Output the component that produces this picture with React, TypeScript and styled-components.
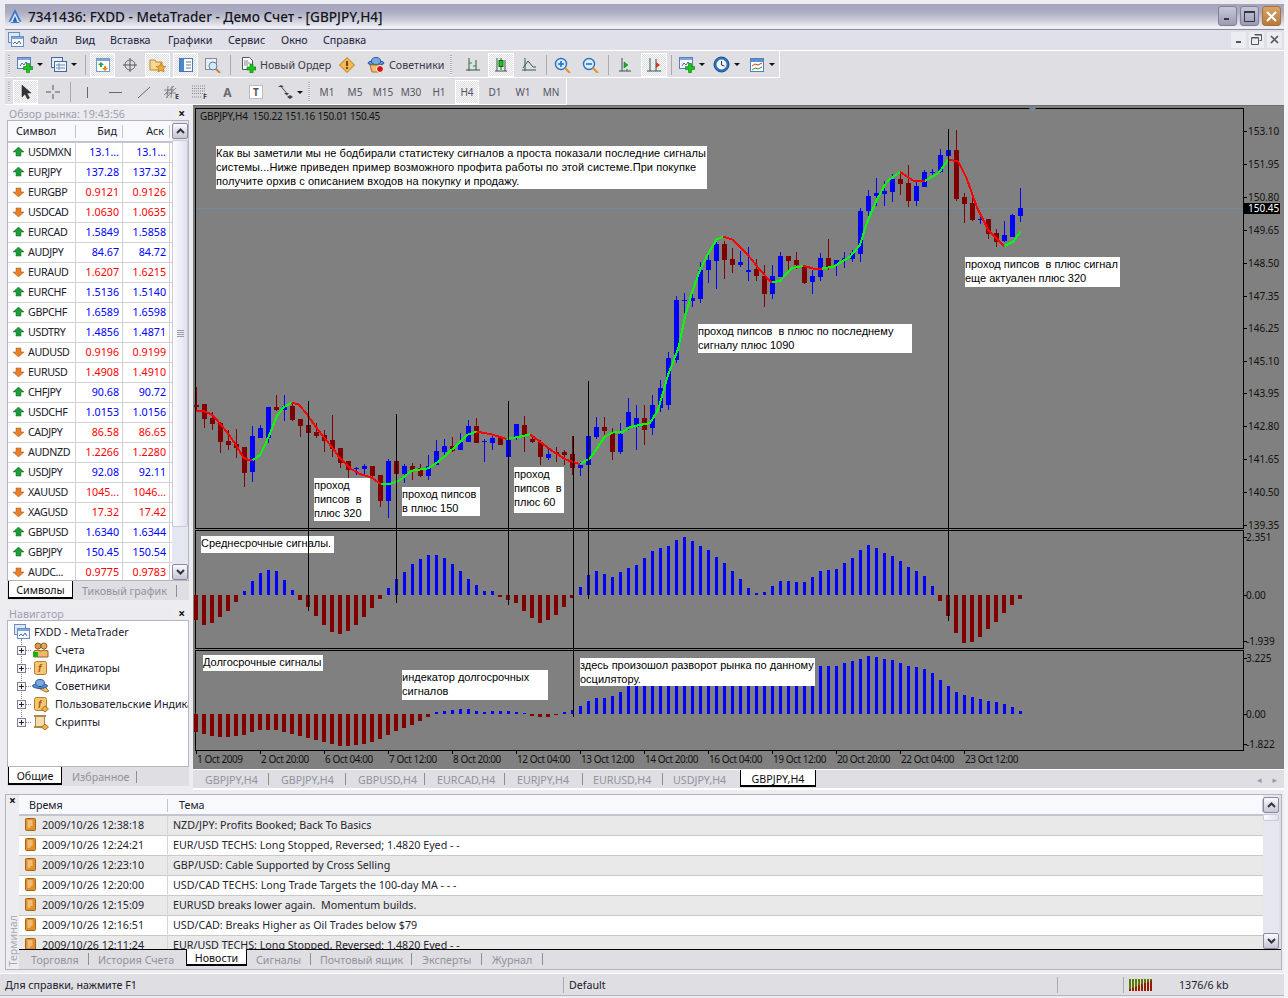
import React from "react";
import styled, { createGlobalStyle } from "styled-components";

const FONT = `"Noto Sans", "DejaVu Sans", sans-serif`;
const NOTE_FONT = `"Liberation Sans", Arial, sans-serif`;
const CHART_X = 193;
const CHART_Y = 105;

const GlobalStyle = createGlobalStyle`
  html, body { margin: 0; padding: 0; background: #f4f4f6; }
  * { box-sizing: border-box; }
`;

const Root = styled.div`
  width: 1284px;
  height: 998px;
  padding: 4px 0 0 5px;
  display: flex;
  flex-direction: column;
  overflow: hidden;
  font-family: ${FONT};
  font-size: 10.7px;
  color: #20202c;
  background: #ededf1;
`;

/* title + menu */
const TitleBar = styled.div`
  height: 24px;
  flex: none;
  display: flex;
  align-items: center;
  padding: 0 3px 0 2px;
  background: linear-gradient(#a3a4bc 0%, #adaec3 35%, #c9cad7 65%, #f3f3f7 100%);
`;

const TitleText = styled.div`
  margin-left: 5px;
  font-size: 13.6px;
  font-weight: 500;
  color: #14141c;
`;

const WinButtons = styled.div`
  margin-left: auto;
  display: flex;
  gap: 3px;
`;

const WinButton = styled.div<{ $close?: boolean }>`
  width: 19px;
  height: 20px;
  border: 1px solid ${(p) => (p.$close ? "#a8703a" : "#7f8096")};
  border-radius: 3px;
  background: ${(p) =>
    p.$close ? "linear-gradient(#d9a468, #b67a3c)" : "linear-gradient(#c7c8d6, #9a9bb2)"};
  display: flex;
  align-items: center;
  justify-content: center;
`;

const MenuBar = styled.div`
  height: 22px;
  flex: none;
  display: flex;
  align-items: center;
  padding: 0 2px 1px 3px;
  margin-top: 1px;
  border-top: 1px solid #8b8ca6;
  border-bottom: 1px solid #fff;
  background: #dfe0e8;
`;

const MenuItem = styled.span<{ $w: number }>`
  width: ${(p) => p.$w}px;
  color: #22223a;
`;

const MdiButtons = styled.div`
  margin-left: auto;
  display: flex;
  gap: 3px;
`;

const MdiButton = styled.div`
  width: 15px;
  height: 16px;
  background: #ecedf2;
  display: flex;
  align-items: center;
  justify-content: center;
`;

/* toolbars */
const ToolRow = styled.div<{ $w: number; $pt: number }>`
  height: 27px;
  width: ${(p) => p.$w}px;
  flex: none;
  display: flex;
  align-items: center;
  padding-top: ${(p) => p.$pt}px;
  background: #dedee3;
  border-right: 1px solid #fff;
  border-bottom: 1px solid #fff;
`;

const ToolStrip = styled.div`
  flex: none;
  background: #dedee3;
`;

const Grip = styled.div<{ $w: number }>`
  width: ${(p) => p.$w}px;
  flex: none;
  height: 20px;
  background: repeating-linear-gradient(#a8a8b2 0 1px, #f4f4f6 1px 2px) no-repeat 3px 0 / 2px 100%;
`;

const Sep = styled.div<{ $w: number }>`
  width: ${(p) => p.$w}px;
  flex: none;
  height: 20px;
  background: linear-gradient(#a9a9b3, #a9a9b3) no-repeat center / 1px 100%;
`;

const Tool = styled.div<{ $w: number; $pad?: number; $pressed?: boolean; $ml?: number }>`
  width: ${(p) => p.$w}px;
  height: 24px;
  flex: none;
  margin-left: ${(p) => p.$ml ?? 0}px;
  display: flex;
  align-items: center;
  gap: 4px;
  justify-content: ${(p) => (p.$pad !== undefined ? "flex-start" : "center")};
  padding-left: ${(p) => p.$pad ?? 0}px;
  color: #3a3a48;
  white-space: nowrap;
  ${(p) =>
    p.$pressed &&
    `border: 1px solid #fff;
     background: repeating-conic-gradient(#fbfbfc 0 25%, #dcdce1 0 50%) 0 0 / 2px 2px;`}
`;

const Period = styled.span`
  font-size: 10px;
  color: #55555f;
`;

const DrawLetter = styled.span`
  font-size: 12px;
  font-weight: 700;
  color: #6a6a72;
`;

const Caret = styled.span`
  width: 0;
  height: 0;
  flex: none;
  border-left: 3px solid transparent;
  border-right: 3px solid transparent;
  border-top: 3px solid #111;
`;

/* main area */
const Main = styled.div`
  height: 685px;
  flex: none;
  display: flex;
`;

const LeftColumn = styled.div`
  width: 188px;
  flex: none;
  display: flex;
  flex-direction: column;
  padding: 2px 4px 0 2px;
`;

const PanelTitle = styled.div`
  height: 13px;
  flex: none;
  display: flex;
  align-items: center;
  justify-content: space-between;
  padding: 0 4px 0 2px;
  color: #a0a0a8;
  background: linear-gradient(90deg, #ebebf1 0 167px, transparent 167px);
`;

const CloseMark = styled.span`
  font-size: 12px;
  font-weight: 700;
  line-height: 1;
  color: #111;
`;

const PanelBody = styled.div<{ $h: number }>`
  height: ${(p) => p.$h}px;
  flex: none;
  display: flex;
  background: #fff;
  border: 1px solid #b4b4c0;
  overflow: hidden;
`;

const Quotes = styled.div`
  width: 164px;
  flex: none;
`;

const HeaderRow = styled.div<{ $cols: string; $h: number }>`
  height: ${(p) => p.$h}px;
  display: grid;
  grid-template-columns: ${(p) => p.$cols};
  align-items: center;
  padding-top: 1px;
  background: #f8f9fd;
  border-bottom: 2px solid #c4c4d0;
`;

const HeadCell = styled.div<{ $right?: boolean; $pad?: number }>`
  height: 13px;
  line-height: 13px;
  padding: 0 5px 0 ${(p) => p.$pad ?? 8}px;
  text-align: ${(p) => (p.$right ? "right" : "left")};
  border-right: 1px solid #c4c4cc;
`;

const QuoteRow = styled.div`
  height: 20px;
  display: grid;
  grid-template-columns: 68px 47px 47px;
  line-height: 18px;
  border-bottom: 1px solid #d0d0d0;
`;

const SymbolCell = styled.div`
  display: flex;
  align-items: center;
  gap: 4px;
  padding: 0 0 1px 5px;
  letter-spacing: -0.4px;
  border-right: 1px solid #d0d0d0;
`;

const PriceCell = styled.div<{ $up: boolean }>`
  text-align: right;
  padding-right: 3px;
  color: ${(p) => (p.$up ? "#0000ff" : "#ff0000")};
  border-right: 1px solid #d0d0d0;
  overflow: hidden;
`;

const ScrollBar = styled.div`
  width: 16px;
  flex: none;
  display: flex;
  flex-direction: column;
  background: #e4e6f0;
  padding-top: 2px;
`;

const ScrollButton = styled.div`
  height: 16px;
  flex: none;
  border: 1px solid #8a8a9c;
  border-radius: 2px;
  background: linear-gradient(#fafaff, #c4c5d6);
  display: flex;
  align-items: center;
  justify-content: center;
`;

const ScrollThumb = styled.div<{ $h: number }>`
  height: ${(p) => p.$h}px;
  flex: none;
  margin-top: 1px;
  border: 1px solid #c9cad8;
  border-radius: 2px;
  background: linear-gradient(90deg, #fbfbff, #dfe1ee);
  display: flex;
  align-items: center;
  justify-content: center;
`;

const ThumbGrip = styled.div`
  width: 7px;
  height: 7px;
  background: repeating-linear-gradient(#9c9cac 0 1px, transparent 1px 2px);
`;

const ScrollTrack = styled.div`
  flex: 1;
`;

const TabStrip = styled.div<{ $h: number; $pad: number; $line?: boolean }>`
  height: ${(p) => p.$h}px;
  flex: none;
  display: flex;
  padding-left: ${(p) => p.$pad}px;
  background: #dedee3;
  ${(p) => p.$line && "border-top: 1px solid #000; padding-bottom: 1px;"}
`;

const Tab = styled.div<{ $w: number; $pad?: number; $active?: boolean; $nosep?: boolean; $lift?: boolean }>`
  width: ${(p) => p.$w}px;
  flex: none;
  display: flex;
  align-items: center;
  white-space: nowrap;
  ${(p) =>
    p.$active
      ? `height: calc(100% - 1px);
         margin-top: ${p.$lift ? "-1px" : "0"};
         padding-top: 2px;
         justify-content: center;
         background: #fff;
         color: #111;
         border-left: 1px solid #000;
         border-right: 1px solid #000;
         border-bottom: 2px solid #000;`
      : `padding: 1px 0 0 ${p.$pad ?? 9}px;
         color: #92929c;
         background: linear-gradient(${p.$nosep ? "transparent, transparent" : "#8e8e98, #8e8e98"}) no-repeat right center / 1px 12px;`}
`;

const NavGap = styled.div`
  height: 7px;
  flex: none;
`;

const Tree = styled.div`
  position: relative;
  flex: 1;
  padding-top: 2px;
  overflow: hidden;
  white-space: nowrap;
  &::before {
    content: "";
    position: absolute;
    left: 13px;
    top: 18px;
    height: 84px;
    border-left: 1px dotted #888;
  }
`;

const TreeRoot = styled.div`
  height: 18px;
  display: flex;
  align-items: center;
  gap: 4px;
  padding-left: 6px;
`;

const TreeRow = styled.div`
  height: 18px;
  display: flex;
  align-items: center;
  padding-left: 9px;
`;

const Expander = styled.span`
  position: relative;
  width: 9px;
  height: 9px;
  flex: none;
  border: 1px solid #808090;
  background:
    linear-gradient(#222, #222) center / 5px 1px no-repeat,
    linear-gradient(#222, #222) center / 1px 5px no-repeat,
    #f4f4f8;
`;

const TreeDash = styled.span`
  width: 5px;
  flex: none;
  border-top: 1px dotted #888;
`;

const TreeIconBox = styled.span`
  width: 20px;
  flex: none;
  display: flex;
  justify-content: center;
  margin-right: 4px;
`;

/* chart */
const ChartPane = styled.div`
  flex: 1;
  display: flex;
  flex-direction: column;
  min-width: 0;
`;

const ChartCanvas = styled.div`
  position: relative;
  height: 664px;
  flex: none;
  background: #808080;
  border-top: 1px solid #6e6e6e;
`;

const ChartSvg = styled.svg`
  display: block;
  position: absolute;
  left: 0;
  top: -1px;
`;

const Note = styled.div<{ $x: number; $y: number; $w: number; $h: number; $ls?: number }>`
  position: absolute;
  left: ${(p) => p.$x - CHART_X}px;
  top: ${(p) => p.$y - CHART_Y - 1}px;
  width: ${(p) => p.$w}px;
  height: ${(p) => p.$h}px;
  background: #fff;
  color: #000;
  font-family: ${NOTE_FONT};
  font-size: 11px;
  line-height: 14px;
  letter-spacing: ${(p) => p.$ls ?? 0}px;
  white-space: pre;
  overflow: hidden;
`;

const Marker = styled.div<{ $x: number; $y: number; $h: number }>`
  position: absolute;
  left: ${(p) => p.$x - CHART_X}px;
  top: ${(p) => p.$y - CHART_Y - 1}px;
  width: 1px;
  height: ${(p) => p.$h}px;
  background: #000;
`;

const ChartTabs = styled(TabStrip)`
  padding-left: 0;
  border-top: 1px solid #fff;
  border-bottom: 2px solid #fff;
`;

const TabArrows = styled.div`
  margin-left: auto;
  padding-right: 7px;
  display: flex;
  align-items: center;
  gap: 11px;
  color: #9a9aa4;
  font-size: 9px;
`;

/* terminal */
const Terminal = styled.div`
  height: 176px;
  margin-top: 4px;
  width: 1277px;
  flex: none;
  display: flex;
  background: #dedee3;
  border: 1px solid #b4b4c0;
`;

const TerminalSide = styled.div`
  width: 13px;
  flex: none;
  display: flex;
  flex-direction: column;
  justify-content: space-between;
  align-items: center;
  padding: 0 0 2px;
  background: #ededf1;
`;

const SideLabel = styled.div`
  writing-mode: vertical-rl;
  transform: rotate(180deg);
  color: #a8a8b0;
  line-height: 12px;
`;

const TerminalMain = styled.div`
  flex: 1;
  display: flex;
  flex-direction: column;
  min-width: 0;
`;

const TerminalTop = styled.div`
  height: 154px;
  flex: none;
  display: flex;
  padding-right: 2px;
  overflow: hidden;
`;

const NewsList = styled.div`
  flex: 1;
  min-width: 0;
`;

const NewsRow = styled.div<{ $odd: boolean }>`
  height: 20px;
  display: grid;
  grid-template-columns: 149px 1fr;
  align-items: center;
  padding-bottom: 1px;
  background: ${(p) => (p.$odd ? "#e9e9e9" : "#fff")};
  border-bottom: 1px solid #c9c9c9;
  color: #24242e;
`;

const NewsTime = styled.div`
  display: flex;
  align-items: center;
  gap: 5px;
  height: 100%;
  padding-left: 6px;
  border-right: 1px solid #d4d4d4;
`;

const NewsTitle = styled.div`
  padding-left: 5px;
  white-space: pre;
`;

const StatusBar = styled.div`
  height: 23px;
  margin-top: 3px;
  margin-left: -5px;
  padding-left: 5px;
  flex: none;
  display: flex;
  align-items: center;
  background: #dedee3;
  border-top: 1px solid #fff;
  border-bottom: 1px solid #b4b4c0;
`;

const StatusCell = styled.div<{ $w: number }>`
  width: ${(p) => p.$w}px;
  height: 16px;
  flex: none;
  display: flex;
  align-items: center;
  gap: 26px;
  padding-left: 5px;
  border-left: 1px solid #aaaab4;
  &:first-child {
    border-left: none;
    padding-left: 0;
  }
`;

const Svg = ({ w = 16, h = 16, children }: { w?: number; h?: number; children: React.ReactNode }) => (
  <svg width={w} height={h} viewBox={`0 0 ${w} ${h}`} style={{ flex: "none", display: "block" }}>
    {children}
  </svg>
);

const Plus = ({ x = 0, y = 0 }: { x?: number; y?: number }) => (
  <path
    transform={`translate(${x} ${y})`}
    d="M3 0h3v3h3v3H6v3H3V6H0V3h3z"
    fill="#18c818"
    stroke="#0c700c"
    strokeWidth=".6"
  />
);

const ChartWindow = () => (
  <>
    <rect x=".5" y=".5" width="13" height="11" fill="#f4f8ff" stroke="#5a7fb8" />
    <rect x="1" y="1" width="12" height="2" fill="#7ea6dc" />
    <path d="M3 9l2-3 2 2 2-3 2 3" fill="none" stroke="#4a6a9a" />
  </>
);

const IconLogo = () => (
  <Svg>
    <path d="M8 1L15 15H1z" fill="#3a78c8" />
    <path d="M8 5l4 8H4z" fill="#dce9f8" />
    <path d="M8 8l2 5H6z" fill="#2a5aa0" />
    <path d="M1 15l5-2M15 15l-5-2" stroke="#fff" />
  </Svg>
);

const IconDoc = () => (
  <Svg>
    <rect x=".5" y=".5" width="11" height="10" fill="#dfe8f6" stroke="#6a8cc0" />
    <rect x="3.5" y="4.5" width="12" height="10" fill="#f6f9ff" stroke="#6a8cc0" />
    <rect x="4" y="5" width="11" height="2" fill="#7ea6dc" />
    <path d="M5 12l2-2 2 2 2-3 2 3" fill="none" stroke="#4a6a9a" />
  </Svg>
);

const IconNewChart = () => (
  <Svg>
    <ChartWindow />
    <Plus x={6.5} y={6.5} />
  </Svg>
);

const IconProfiles = () => (
  <Svg>
    <rect x=".5" y=".5" width="11" height="10" fill="#e4ecf8" stroke="#46689c" />
    <rect x="3.5" y="4.5" width="12" height="10" fill="#eef4ff" stroke="#46689c" />
    <path d="M5 8h9M5 11h9M8 6v7" stroke="#7a8ea8" />
  </Svg>
);

const IconWatch = () => (
  <Svg>
    <rect x="1.5" y="1.5" width="13" height="13" fill="#fff" stroke="#7a9cc8" />
    <rect x="2" y="2" width="12" height="2" fill="#7ea6dc" />
    <path d="M6 5l3 3H7v2H5V8H3z" fill="#28a828" />
    <path d="M10 14l-3-3h2V9h2v2h2z" fill="#e08a20" />
  </Svg>
);

const IconCross = () => (
  <Svg>
    <circle cx="8" cy="8" r="5" fill="none" stroke="#6a6a72" />
    <path d="M8 1v14M1 8h14" stroke="#55555e" />
  </Svg>
);

const IconFolderStar = () => (
  <Svg w={18}>
    <path d="M1 3h5l1 2h6v8H1z" fill="#f6d890" stroke="#b98a30" />
    <path d="M12 6l1.5 3 3.3.5-2.4 2.3.6 3.2-3-1.6-3 1.6.6-3.2-2.4-2.3L10.500 9z" fill="#f0a830" stroke="#b06a10" strokeWidth=".6" />
  </Svg>
);

const IconNav = () => (
  <Svg>
    <rect x="1.5" y="1.500" width="13" height="13" fill="#fff" stroke="#4a78b4" />
    <rect x="2" y="2" width="4" height="12" fill="#4a88d0" />
    <path d="M8 5h5M8 8h5M8 11h5" stroke="#6a7a90" />
  </Svg>
);

const IconMagnifyDoc = () => (
  <Svg w={18}>
    <rect x="1.500" y="1.500" width="11" height="11" fill="#eee" stroke="#8a8a94" />
    <circle cx="9" cy="9" r="4" fill="#d6e8f8" stroke="#5a7ea8" />
    <path d="M12 12l4 4" stroke="#c88430" strokeWidth="2" />
  </Svg>
);

const IconOrder = () => (
  <Svg>
    <path d="M2.500 .5h7l3 3v9h-10z" fill="#fff" stroke="#555" />
    <path d="M4 4h4M4 6h6M4 8h4" stroke="#789" />
    <Plus x={7} y={7} />
  </Svg>
);

const IconAlert = () => (
  <Svg>
    <path d="M8 .5L15.500 8 8 15.500 .5 8z" fill="#f4b850" stroke="#b87818" />
    <path d="M7 4h2v5H7zM7 10h2v2H7z" fill="#70441a" />
  </Svg>
);

const IconHat = () => (
  <Svg w={18}>
    <ellipse cx="9" cy="6" rx="8" ry="2.400" fill="#5a8ed0" stroke="#2a5a9a" />
    <ellipse cx="9" cy="4" rx="4.500" ry="3.500" fill="#7aaae0" stroke="#2a5a9a" />
    <path d="M3 8h11l1 7H5z" fill="#f2c074" stroke="#a87020" />
    <circle cx="13" cy="12" r="3.500" fill="#d01818" stroke="#fff" />
  </Svg>
);

const Axes = ({ children }: { children?: React.ReactNode }) => (
  <Svg>
    <path d="M4 1v13M1 13h14M11 3v10" stroke="#37584c" fill="none" />
    {children}
  </Svg>
);

const IconBars = () => (
  <Axes>
    <path d="M4 6h3M11 9H8" stroke="#20a020" />
  </Axes>
);

const IconCandle = () => (
  <Svg>
    <path d="M4 1v13M2 14h12M12 3v11" stroke="#37584c" fill="none" />
    <path d="M8 1v12" stroke="#0a6a0a" />
    <rect x="6" y="3.500" width="4" height="6" fill="#18c818" stroke="#0a6a0a" />
  </Svg>
);

const IconLine = () => (
  <Svg>
    <path d="M4 1v13M1 13h14" stroke="#37584c" fill="none" />
    <path d="M2 11L7 4l5 6h3" stroke="#37584c" fill="none" />
  </Svg>
);

const IconZoom = ({ plus }: { plus?: boolean }) => (
  <Svg w={18}>
    <circle cx="7" cy="7" r="5.500" fill="#d8ecfc" stroke="#2a72c0" strokeWidth="1.400" />
    <path d="M4 7h6" stroke="#2a72c0" strokeWidth="1.600" />
    {plus && <path d="M7 4v6" stroke="#2a72c0" strokeWidth="1.600" />}
    <path d="M11 11l5 5" stroke="#e0962e" strokeWidth="2.200" />
  </Svg>
);

const IconAuto = () => (
  <Svg>
    <path d="M5 1v13M2 14h12" stroke="#37584c" fill="none" />
    <path d="M7 5l4 3-4 3z" fill="#18b018" stroke="#0a6a0a" strokeWidth=".5" />
    <path d="M10 12v2" stroke="#37584c" />
  </Svg>
);

const IconShift = () => (
  <Svg>
    <path d="M4 1v13M1 14h14M10 2v12" stroke="#37584c" fill="none" />
    <path d="M10 5l4 3-4 3z" fill="#c83a10" />
  </Svg>
);

const IconClock = () => (
  <Svg w={17} h={17}>
    <circle cx="8.500" cy="8.500" r="7.500" fill="#2a72c0" stroke="#1a4a8a" />
    <circle cx="8.500" cy="8.500" r="5" fill="#eef4fa" />
    <path d="M8.500 5v4l3 1" stroke="#333" fill="none" />
  </Svg>
);

const IconTemplate = () => (
  <Svg>
    <rect x="1.500" y="1.500" width="13" height="13" fill="#fff" stroke="#5a7fb8" />
    <rect x="2" y="2" width="12" height="3" fill="#5a90d8" />
    <path d="M3 9l3-2 3 1 4-2" stroke="#c84020" fill="none" />
    <path d="M3 13l3-2 3 1 4-2" stroke="#289028" fill="none" />
  </Svg>
);

const IconCursor = () => (
  <Svg>
    <path d="M4 1v12l3-3 2.500 5 2-1L9 9h4z" fill="#333" stroke="#222" strokeWidth=".5" />
  </Svg>
);

const IconThinCross = () => (
  <Svg>
    <path d="M8 1v5M8 10v5M1 8h5M10 8h5" stroke="#55555e" />
  </Svg>
);

const IconSimple = ({ d }: { d: string }) => (
  <Svg>
    <path d={d} stroke="#66666e" fill="none" />
  </Svg>
);

const IconChannels = () => (
  <Svg w={18}>
    <path d="M1 11L11 2M3 14L13 4M1 6h10M3 9h10M5 2l-1 12M9 2L8 14" stroke="#70707a" fill="none" strokeWidth=".8" />
    <text x="12" y="15" fontSize="7" fontWeight="700" fill="#444" fontFamily={FONT}>E</text>
  </Svg>
);

const IconFib = () => (
  <Svg w={18}>
    <path d="M1 2h14M1 4.500h14M1 7h14M1 9.500h14M1 13h9" stroke="#85858e" strokeDasharray="1 1" />
    <text x="12" y="15" fontSize="7" fontWeight="700" fill="#444" fontFamily={FONT}>F</text>
  </Svg>
);

const IconTextBox = () => (
  <Svg>
    <rect x="1.500" y="1.500" width="13" height="13" fill="#fff" stroke="#888" strokeDasharray="1 1" />
    <text x="5" y="12" fontSize="10" fontWeight="700" fill="#55555e" fontFamily={FONT}>T</text>
  </Svg>
);

const IconArrows = () => (
  <Svg>
    <path d="M1 3l3-2 3 2H5l5 6h2l-2 2.500L7 9h2L4 3z" fill="#444" />
    <path d="M10 13l3-2 3 2-3 2z" fill="#444" />
  </Svg>
);

const IconArrow = ({ up }: { up: boolean }) => (
  <svg width="11" height="10" viewBox="0 0 11 10" style={{ flex: "none" }}>
    {up ? (
      <path d="M5.500 0L11 5H8v4H3V5H0z" fill="#1e9a3a" stroke="#0e6a24" strokeWidth=".5" />
    ) : (
      <path d="M5.500 10L0 5h3V1h5v4h3z" fill="#e8802a" stroke="#a85010" strokeWidth=".5" />
    )}
  </svg>
);

const IconAccounts = () => (
  <Svg w={18}>
    <circle cx="6" cy="4" r="3" fill="#d89a4a" stroke="#946020" />
    <circle cx="12" cy="4" r="3" fill="#e2aa5c" stroke="#946020" />
    <path d="M2 15V9q4-2 7 0 3-2 7 0v6z" fill="#eeb868" stroke="#946020" />
    <rect x="1" y="10" width="5" height="5" fill="#18b018" />
  </Svg>
);

const IconScriptF = ({ badge }: { badge?: boolean }) => (
  <Svg w={18}>
    <rect x="2.500" y="1.500" width="12" height="13" rx="2" fill="#f6c674" stroke="#b87c24" />
    <text x="6" y="12" fontSize="10" fontStyle="italic" fontWeight="700" fill="#a0621a" fontFamily={NOTE_FONT}>f</text>
    {badge && <path d="M13 10l3.500 3L13 16l-3.500-3z" fill="#f0b050" stroke="#a87020" />}
  </Svg>
);

const IconHatTree = () => (
  <Svg w={18}>
    <path d="M4 9l10 5 3-1-6-6z" fill="#f2c074" stroke="#a87020" />
    <ellipse cx="8" cy="8" rx="7.500" ry="2.400" fill="#5a8ed0" stroke="#2a5a9a" />
    <ellipse cx="8" cy="5" rx="4.500" ry="3.500" fill="#7aaae0" stroke="#2a5a9a" />
  </Svg>
);

const IconScroll = () => (
  <Svg w={18}>
    <rect x="3.500" y="1.500" width="9" height="11" fill="#f4dcae" stroke="#a88a50" />
    <path d="M2 2h12M2 13h12" stroke="#a88a50" strokeWidth="2" />
    <path d="M13 10l3.500 3L13 16l-3.500-3z" fill="#f0b050" stroke="#a87020" />
  </Svg>
);

const IconNews = () => (
  <Svg w={12} h={14}>
    <rect x=".5" y=".5" width="10" height="12" rx="1" fill="#e0902a" stroke="#a86214" />
    <path d="M2.500 3h5M2.500 5h5M2.500 7h5M2.500 9h3" stroke="#fce8c0" />
  </Svg>
);

const Chevron = ({ up }: { up?: boolean }) => (
  <svg width="9" height="6" viewBox="0 0 9 6">
    <path d={up ? "M1 5l3.500-3.500L8 5" : "M1 1l3.500 3.500L8 1"} fill="none" stroke="#333" strokeWidth="2" />
  </svg>
);

const ConnBars = () => (
  <Svg w={24} h={12}>
    {[0, 1, 2, 3, 4, 5, 6, 7].map((i) => (
      <g key={i}>
        <rect x={i * 3} y={0} width={2} height={12} fill="#5a7a00" />
        <rect x={i * 3} y={10 - i * 1.2} width={2} height={2 + i * 1.2} fill="#9a1a00" />
      </g>
    ))}
  </Svg>
);

const GlyphMin = () => (
  <svg width="11" height="11" viewBox="0 0 11 11">
    <rect x="2" y="7" width="5" height="2" fill="#33334a" />
  </svg>
);

const GlyphMax = () => (
  <svg width="13" height="13" viewBox="0 0 13 13">
    <path d="M1.500 2.500h10v9h-10z" fill="none" stroke="#33334a" />
    <path d="M1 2h11" stroke="#33334a" strokeWidth="2" />
  </svg>
);

const GlyphClose = () => (
  <svg width="13" height="13" viewBox="0 0 13 13">
    <path d="M2 2l9 9M11 2l-9 9" stroke="#fff" strokeWidth="2" />
  </svg>
);

const MdiMin = () => (
  <svg width="9" height="9" viewBox="0 0 9 9">
    <rect x="2" y="6" width="5" height="2" fill="#55555f" />
  </svg>
);

const MdiRestore = () => (
  <svg width="11" height="11" viewBox="0 0 11 11">
    <path d="M3.500 .5h7v6h-2M.5 3.500h7v7h-7z" fill="none" stroke="#55555f" />
    <path d="M1 4h6M4 1h6" stroke="#55555f" />
  </svg>
);

const MdiClose = () => (
  <svg width="9" height="9" viewBox="0 0 9 9">
    <path d="M1 1l7 7M8 1L1 8" stroke="#55555f" strokeWidth="1.700" />
  </svg>
);

/* market data */
const QUOTES: [string, string, string, boolean][] = [
  ["USDMXN", "13.1...", "13.1...", true],
  ["EURJPY", "137.28", "137.32", true],
  ["EURGBP", "0.9121", "0.9126", false],
  ["USDCAD", "1.0630", "1.0635", false],
  ["EURCAD", "1.5849", "1.5858", true],
  ["AUDJPY", "84.67", "84.72", true],
  ["EURAUD", "1.6207", "1.6215", false],
  ["EURCHF", "1.5136", "1.5140", true],
  ["GBPCHF", "1.6589", "1.6598", true],
  ["USDTRY", "1.4856", "1.4871", true],
  ["AUDUSD", "0.9196", "0.9199", false],
  ["EURUSD", "1.4908", "1.4910", false],
  ["CHFJPY", "90.68", "90.72", true],
  ["USDCHF", "1.0153", "1.0156", true],
  ["CADJPY", "86.58", "86.65", false],
  ["AUDNZD", "1.2266", "1.2280", false],
  ["USDJPY", "92.08", "92.11", true],
  ["XAUUSD", "1045...", "1046...", false],
  ["XAGUSD", "17.32", "17.42", false],
  ["GBPUSD", "1.6340", "1.6344", true],
  ["GBPJPY", "150.45", "150.54", true],
  ["AUDC...", "0.9775", "0.9783", false],
];

const NEWS = [
  ["2009/10/26 12:38:18", "NZD/JPY: Profits Booked; Back To Basics"],
  ["2009/10/26 12:24:21", "EUR/USD TECHS: Long Stopped, Reversed; 1.4820 Eyed - -"],
  ["2009/10/26 12:23:10", "GBP/USD: Cable Supported by Cross Selling"],
  ["2009/10/26 12:20:00", "USD/CAD TECHS: Long Trade Targets the 100-day MA - - -"],
  ["2009/10/26 12:15:09", "EURUSD breaks lower again.  Momentum builds."],
  ["2009/10/26 12:16:51", "USD/CAD: Breaks Higher as Oil Trades below $79"],
  ["2009/10/26 12:11:24", "EUR/USD TECHS: Long Stopped, Reversed; 1.4820 Eyed - -"],
];

// hi, top, bottom, lo, blue? -- y in 1/3 px, from y=380
const CANDLES_A: number[][] = [
  [20, 75, 80, 95, 0], [73, 73, 117, 143, 0], [95, 113, 132, 150, 0], [125, 130, 186, 220, 0],
  [150, 183, 195, 210, 0], [148, 193, 204, 233, 0], [201, 201, 278, 320, 0], [138, 168, 275, 305, 1],
  [135, 144, 174, 174, 1], [81, 81, 175, 190, 1], [45, 81, 90, 93, 0], [45, 78, 90, 123, 1],
  [66, 78, 120, 123, 0], [117, 117, 138, 170, 0], [115, 135, 159, 159, 0], [130, 155, 168, 175, 0],
  [150, 165, 183, 215, 0], [105, 180, 207, 230, 0], [204, 204, 249, 265, 0], [243, 243, 270, 295, 0],
  [262, 264, 268, 285, 1], [252, 258, 267, 282, 1], [258, 258, 288, 290, 0], [285, 285, 363, 380, 0],
  [237, 243, 363, 414, 1], [243, 243, 282, 300, 0], [252, 258, 282, 308, 1], [250, 258, 273, 300, 0],
  [252, 264, 288, 290, 0], [225, 258, 288, 300, 1], [180, 213, 255, 255, 1], [177, 198, 216, 225, 1],
  [170, 198, 213, 216, 0], [160, 186, 210, 210, 1], [120, 138, 186, 186, 1], [115, 138, 189, 189, 0],
  [177, 183, 186, 246, 1], [165, 174, 189, 210, 1], [168, 171, 195, 195, 0], [175, 180, 231, 231, 1],
  [132, 132, 174, 180, 1], [108, 135, 165, 215, 0], [165, 177, 186, 190, 0], [180, 186, 231, 255, 0],
  [205, 222, 234, 240, 1], [200, 216, 222, 245, 0], [210, 216, 226, 255, 0], [168, 222, 264, 285, 0],
  [245, 255, 264, 288, 1], [168, 168, 255, 255, 1], [110, 141, 171, 177, 1], [110, 141, 153, 165, 0],
  [145, 159, 216, 240, 0], [130, 162, 216, 222, 1], [55, 96, 141, 150, 1],
];

// same, from y=110
const CANDLES_B: number[][] = [
  [885, 924, 951, 1020, 1], [885, 924, 960, 1005, 0], [855, 885, 954, 975, 1], [810, 834, 894, 906, 1],
  [726, 744, 885, 900, 1], [558, 570, 750, 760, 1], [548, 569, 571, 610, 1], [548, 564, 572, 590, 1],
  [455, 480, 567, 580, 1], [435, 450, 480, 520, 1], [393, 402, 453, 537, 1], [393, 402, 450, 507, 0],
  [414, 447, 465, 489, 0], [423, 456, 465, 471, 1], [411, 480, 485, 513, 1], [447, 477, 498, 513, 0],
  [465, 498, 552, 591, 0], [465, 498, 552, 567, 1], [426, 438, 501, 501, 1], [438, 438, 453, 483, 0],
  [426, 450, 465, 477, 0], [468, 468, 519, 522, 0], [480, 498, 516, 552, 1], [429, 444, 501, 513, 1],
  [387, 444, 471, 480, 0], [450, 450, 465, 498, 1], [426, 445, 450, 475, 1], [420, 430, 447, 456, 1],
  [294, 303, 432, 456, 1], [240, 258, 303, 318, 1], [204, 249, 258, 288, 1], [213, 243, 252, 288, 1],
  [192, 207, 246, 276, 1], [186, 207, 222, 255, 0], [165, 219, 273, 291, 0], [210, 228, 273, 288, 1],
  [180, 186, 231, 231, 1], [177, 185, 188, 198, 1], [117, 135, 186, 189, 1], [105, 120, 138, 138, 1],
  [60, 120, 267, 273, 0], [249, 261, 282, 339, 0], [252, 279, 330, 333, 0], [309, 326, 329, 342, 1],
  [327, 327, 372, 387, 0], [357, 369, 396, 411, 0], [333, 375, 393, 396, 1], [312, 315, 381, 381, 1],
  [234, 294, 318, 336, 1],
];

const CANDLES = [
  ...CANDLES_A.map((c) => [380 + c[0] / 3, 380 + c[1] / 3, 380 + c[2] / 3, 380 + c[3] / 3, c[4]]),
  ...CANDLES_B.map((c) => [110 + c[0] / 3, 110 + c[1] / 3, 110 + c[2] / 3, 110 + c[3] / 3, c[4]]),
];

const HIST_MID = [
  -25, -30, -28, -22, -16, -7, 4, 14, 22, 25, 24, 15, 5, -5, -12, -21, -30, -37, -39, -36, -30, -22, -13, -4, 7, 16, 23,
  31, 36, 40, 40, 37, 31, 24, 16, 10, 4, 4, -2, -5, -8, -16, -23, -28, -25, -20, -12, -3, 8, 20, 24, 21, 18, 23, 27, 30,
  37, 44, 47, 49, 55, 58, 54, 49, 45, 38, 32, 24, 16, 7, 2, 3, 9, 14, 14, 13, 13, 18, 24, 25, 26, 32, 37, 45, 50, 47,
  42, 39, 34, 28, 24, 19, 9, -6, -21, -38, -48, -47, -42, -34, -27, -18, -10, -4,
];

const HIST_LONG = [
  -18, -20, -22, -23, -23, -22, -21, -18, -16, -16, -16, -18, -20, -22, -24, -26, -28, -30, -32, -32, -31, -30, -28, -25,
  -21, -17, -14, -11, -7, -3, 2, 3, 4, 5, 5, 3, 2, 3, 3, 3, 2, 1, -2, -3, -3, -1, 2, 4, 8, 13, 16, 16, 18, 22, 30, 32, 34,
  36, 38, 38, 40, 42, 44, 44, 44, 44, 44, 42, 40, 40, 40, 40, 42, 44, 44, 46, 46, 46, 48, 48, 48, 51, 53, 55, 58, 57, 55,
  54, 51, 48, 47, 45, 41, 34, 28, 22, 19, 17, 15, 13, 12, 10, 7, 3,
];

// [colour, x0, y0, zoomed x/y pairs]
const MA: [string, number, number, number[]][] = [
  ["#ff0000", 190, 380, [18, 92, 40, 93, 65, 103, 85, 125, 110, 155, 135, 190, 160, 232, 175, 240, 188, 240]],
  ["#00ff00", 190, 380, [188, 240, 210, 225, 225, 195, 240, 160, 260, 110, 280, 82, 305, 68]],
  ["#ff0000", 190, 380, [305, 68, 325, 73, 345, 95, 370, 130, 400, 170, 425, 200, 450, 235, 480, 265, 510, 282, 545, 293, 572, 312]],
  ["#00ff00", 190, 380, [572, 312, 600, 312, 630, 300, 665, 272, 715, 265, 745, 245, 790, 205, 830, 165, 860, 155]],
  ["#ff0000", 190, 380, [860, 155, 900, 162, 950, 177]],
  ["#00ff00", 190, 380, [950, 177, 1000, 168, 1020, 163]],
  ["#ff0000", 190, 380, [1020, 163, 1050, 185, 1090, 215, 1130, 240, 1170, 252]],
  ["#00ff00", 190, 380, [1170, 252, 1200, 235, 1245, 170, 1270, 157, 1300, 155, 1320, 140]],
  ["#00ff00", 600, 110, [90, 951, 120, 945, 150, 939, 174, 900, 204, 795, 235, 715, 255, 620, 275, 550, 300, 480, 325, 430, 350, 388, 370, 380]],
  ["#ff0000", 600, 110, [370, 380, 400, 390, 440, 430, 480, 480, 515, 518]],
  ["#00ff00", 600, 110, [515, 518, 540, 512, 575, 475, 610, 467]],
  ["#ff0000", 600, 110, [610, 467, 640, 476, 665, 476]],
  ["#00ff00", 600, 110, [665, 476, 700, 470, 750, 440, 780, 405, 800, 340, 830, 270, 860, 215, 900, 186]],
  ["#ff0000", 600, 110, [900, 186, 940, 212, 975, 212]],
  ["#00ff00", 600, 110, [975, 212, 1015, 190, 1045, 148]],
  ["#ff0000", 600, 110, [1045, 148, 1075, 155, 1100, 205, 1130, 290, 1165, 360, 1213, 408]],
  ["#00ff00", 600, 110, [1213, 408, 1240, 395, 1261, 365]],
];

const PRICE_LABELS: [string, number, number][] = [
  ["153.10", 131, 1248], ["151.95", 164, 1248], ["150.80", 197, 1248], ["149.65", 230, 1248], ["148.50", 263, 1248],
  ["147.35", 296, 1248], ["146.25", 328, 1248], ["145.10", 361, 1248], ["143.95", 393, 1248], ["142.80", 426, 1248],
  ["141.65", 459, 1248], ["140.50", 492, 1248], ["139.35", 525, 1248],
  ["2.351", 537, 1246], ["0.00", 595, 1246], ["-1.939", 641, 1246], ["3.225", 658, 1246], ["0.00", 714, 1246], ["-1.822", 744, 1246],
];

const TIME_LABELS = [
  "1 Oct 2009", "2 Oct 20:00", "6 Oct 04:00", "7 Oct 12:00", "8 Oct 20:00", "12 Oct 04:00", "13 Oct 12:00",
  "14 Oct 20:00", "16 Oct 04:00", "19 Oct 12:00", "20 Oct 20:00", "22 Oct 04:00", "23 Oct 12:00",
];

const NOTES: { x: number; y: number; w: number; h: number; ls?: number; text: string }[] = [
  {
    x: 216, y: 146, w: 491, h: 43, ls: 0.06,
    text: "Как вы заметили мы не бодбирали статистеку сигналов а проста показали последние сигналы\nсистемы...Ниже приведен пример возможного профита работы по этой системе.При покупке\nполучите орхив с описанием входов на покупку и продажу.",
  },
  { x: 698, y: 324, w: 214, h: 29, text: "проход пипсов  в плюс по последнему\nсигналу плюс 1090" },
  { x: 965, y: 257, w: 155, h: 30, text: "проход пипсов  в плюс сигнал\nеще актуален плюс 320" },
  { x: 314, y: 478, w: 56, h: 43, text: "проход\nпипсов  в\nплюс 320" },
  { x: 402, y: 487, w: 78, h: 29, text: "проход пипсов\nв плюс 150" },
  { x: 514, y: 467, w: 50, h: 46, text: "проход\nпипсов  в\nплюс 60" },
  { x: 201, y: 536, w: 133, h: 17, text: "Среднесрочные сигналы." },
  { x: 203, y: 655, w: 120, h: 16, text: "Долгосрочные сигналы" },
  { x: 402, y: 670, w: 146, h: 30, text: "индекатор долгосрочных\nсигналов" },
  { x: 580, y: 658, w: 235, h: 28, text: "здесь произошол разворот рынка по данному\nосцилятору." },
];

const MARKERS = [
  { x: 308, y: 401, h: 210 },
  { x: 396, y: 414, h: 189 },
  { x: 508, y: 401, h: 204 },
  { x: 573, y: 436, h: 281 },
  { x: 588, y: 381, h: 218 },
  { x: 948, y: 129, h: 492 },
];

const CHART_TABS: [string, number, number][] = [
  ["GBPJPY,H4", 76, 12], ["GBPJPY,H4", 77, 12], ["GBPUSD,H4", 79, 12], ["EURCAD,H4", 80, 12],
  ["EURJPY,H4", 78, 12], ["EURUSD,H4", 80, 10], ["USDJPY,H4", 77, 10],
];

const Chart = () => (
  <ChartSvg width={1091} height={664} viewBox={`${CHART_X} ${CHART_Y} 1091 664`} fontFamily={FONT} fontSize="10" fill="#111">
    <rect x="195.500" y="108.500" width="1048" height="420" fill="none" stroke="#000" />
    <rect x="195.500" y="530.500" width="1048" height="118" fill="none" stroke="#000" />
    <rect x="195.500" y="650.500" width="1048" height="100" fill="none" stroke="#000" />
    <line x1="196" x2="1243" y1="208.500" y2="208.500" stroke="#778899" />

    <g shapeRendering="crispEdges">
      {CANDLES.map(([hi, top, bot, lo, blue], k) => {
        const color = blue ? "#0000ff" : "#800000";
        return (
          <g key={k} fill={color}>
            <rect x={196 + 8 * k} y={hi} width="1" height={lo - hi} />
            <rect x={194 + 8 * k} y={top} width="5" height={Math.max(1, bot - top)} />
          </g>
        );
      })}
      {MA.map(([color, x0, y0, pts], i) => (
        <polyline
          key={i}
          fill="none"
          stroke={color}
          strokeWidth="2"
          points={pts.map((v, j) => (j % 2 ? y0 + v / 3 : x0 + v / 3)).join(" ")}
        />
      ))}
      {HIST_MID.map((v, k) => (
        <rect
          key={k}
          x={v > 0 ? 195 + 8 * k : 194 + 8 * k}
          y={v > 0 ? 595 - v : 595}
          width={v > 0 ? 3 : 4}
          height={Math.abs(v)}
          fill={v > 0 ? "#0000ff" : "#800000"}
        />
      ))}
      {HIST_LONG.map((v, k) => (
        <rect
          key={k}
          x={v > 0 ? 195 + 8 * k : 194 + 8 * k}
          y={v > 0 ? 714 - v : 714}
          width={v > 0 ? 3 : 4}
          height={Math.abs(v)}
          fill={v > 0 ? "#0000ff" : "#800000"}
        />
      ))}
    </g>

    <path d="M1029 108h7l-3.500 5zM196 750v-4l4 4z" fill="#778899" />
    <text x="200" y="120" letterSpacing="-0.2" style={{ whiteSpace: "pre" }}>GBPJPY,H4  150.22 151.16 150.01 150.45</text>

    {PRICE_LABELS.map(([label, y, x]) => (
      <g key={label + y}>
        <line x1="1244" x2="1247" y1={y + 0.5} y2={y + 0.5} stroke="#000" />
        <text x={x} y={y + 4}>{label}</text>
      </g>
    ))}
    <rect x="1244" y="203" width="36" height="11" fill="#000" />
    <text x="1248" y="212" fill="#fff">150.45</text>

    {TIME_LABELS.map((label, i) => (
      <g key={label}>
        <line x1={196.5 + 64 * i} x2={196.5 + 64 * i} y1="751" y2="754" stroke="#000" />
        <text x={197 + 64 * i} y="763" letterSpacing="-0.45">{label}</text>
      </g>
    ))}
  </ChartSvg>
);

const App = () => (
  <Root>
    <GlobalStyle />
    <TitleBar>
      <IconLogo />
      <TitleText>7341436: FXDD - MetaTrader - Демо Счет - [GBPJPY,H4]</TitleText>
      <WinButtons>
        <WinButton><GlyphMin /></WinButton>
        <WinButton><GlyphMax /></WinButton>
        <WinButton $close><GlyphClose /></WinButton>
      </WinButtons>
    </TitleBar>
    <MenuBar>
      <IconDoc />
      <MenuItem $w={6} />
      {[["Файл", 45], ["Вид", 35], ["Вставка", 58], ["Графики", 60], ["Сервис", 53], ["Окно", 42], ["Справка", 60]].map(([t, w]) => (
        <MenuItem key={t as string} $w={w as number}>{t}</MenuItem>
      ))}
      <MdiButtons>
        <MdiButton><MdiMin /></MdiButton>
        <MdiButton><MdiRestore /></MdiButton>
        <MdiButton><MdiClose /></MdiButton>
      </MdiButtons>
    </MenuBar>

    <ToolStrip>
      <ToolRow $w={775} $pt={1}>
        <Grip $w={9} />
        <Tool $w={33} $pad={3}><IconNewChart /><Caret /></Tool>
        <Tool $w={34} $pad={4}><IconProfiles /><Caret /></Tool>
        <Sep $w={8} />
        <Tool $w={25} $ml={1} $pressed><IconWatch /></Tool>
        <Tool $w={30}><IconCross /></Tool>
        <Tool $w={25} $pressed><IconFolderStar /></Tool>
        <Tool $w={25} $ml={3} $pressed><IconNav /></Tool>
        <Tool $w={30}><IconMagnifyDoc /></Tool>
        <Sep $w={4} />
        <Tool $w={100} $pad={8}><IconOrder />Новый Ордер</Tool>
        <Tool $w={30}><IconAlert /></Tool>
        <Tool $w={85} $pad={5}><IconHat />Советники</Tool>
        <Grip $w={11} />
        <Tool $w={30}><IconBars /></Tool>
        <Tool $w={26} $pressed><IconCandle /></Tool>
        <Tool $w={30}><IconLine /></Tool>
        <Sep $w={5} />
        <Tool $w={28}><IconZoom plus /></Tool>
        <Tool $w={27}><IconZoom /></Tool>
        <Sep $w={8} />
        <Tool $w={26}><IconAuto /></Tool>
        <Tool $w={26} $ml={3} $pressed><IconShift /></Tool>
        <Sep $w={8} />
        <Tool $w={35} $pad={4}><IconNewChart /><Caret /></Tool>
        <Tool $w={36} $pad={3}><IconClock /><Caret /></Tool>
        <Tool $w={32} $pad={3}><IconTemplate /><Caret /></Tool>
      </ToolRow>
      <ToolRow $w={562} $pt={2}>
        <Grip $w={8} />
        <Tool $w={25} $pressed><IconCursor /></Tool>
        <Tool $w={30}><IconThinCross /></Tool>
        <Sep $w={5} />
        <Tool $w={28}><IconSimple d="M8.500 3v11" /></Tool>
        <Tool $w={28}><IconSimple d="M2 8.500h13" /></Tool>
        <Tool $w={29}><IconSimple d="M2 14L14 3" /></Tool>
        <Tool $w={28}><IconChannels /></Tool>
        <Tool $w={28}><IconFib /></Tool>
        <Tool $w={27}><DrawLetter>A</DrawLetter></Tool>
        <Tool $w={29}><IconTextBox /></Tool>
        <Tool $w={35} $pad={7}><IconArrows /><Caret /></Tool>
        <Grip $w={8} />
        {["M1", "M5", "M15", "M30", "H1"].map((p) => (
          <Tool key={p} $w={28}><Period>{p}</Period></Tool>
        ))}
        <Tool $w={24} $ml={2} $pressed><Period>H4</Period></Tool>
        <Tool $w={28} $ml={2}><Period>D1</Period></Tool>
        <Tool $w={28}><Period>W1</Period></Tool>
        <Tool $w={28}><Period>MN</Period></Tool>
      </ToolRow>
    </ToolStrip>

    <Main>
      <LeftColumn>
        <PanelTitle>Обзор рынка: 19:43:56<CloseMark>×</CloseMark></PanelTitle>
        <PanelBody $h={461}>
          <Quotes>
            <HeaderRow $cols="68px 47px 47px" $h={22}>
              <HeadCell>Символ</HeadCell>
              <HeadCell $right>Бид</HeadCell>
              <HeadCell $right>Аск</HeadCell>
            </HeaderRow>
            {QUOTES.map(([sym, bid, ask, up]) => (
              <QuoteRow key={sym}>
                <SymbolCell><IconArrow up={up} />{sym}</SymbolCell>
                <PriceCell $up={up}>{bid}</PriceCell>
                <PriceCell $up={up}>{ask}</PriceCell>
              </QuoteRow>
            ))}
          </Quotes>
          <ScrollBar>
            <ScrollButton><Chevron up /></ScrollButton>
            <ScrollThumb $h={387}><ThumbGrip /></ScrollThumb>
            <ScrollTrack />
            <ScrollButton><Chevron /></ScrollButton>
          </ScrollBar>
        </PanelBody>
        <TabStrip $h={19} $pad={1}>
          <Tab $w={65} $active>Символы</Tab>
          <Tab $w={104}>Тиковый график</Tab>
        </TabStrip>
        <NavGap />
        <PanelTitle>Навигатор<CloseMark>×</CloseMark></PanelTitle>
        <PanelBody $h={147}>
          <Tree>
            <TreeRoot><IconDoc />FXDD - MetaTrader</TreeRoot>
            {[
              ["Счета", <IconAccounts key="a" />],
              ["Индикаторы", <IconScriptF key="i" />],
              ["Советники", <IconHatTree key="e" />],
              ["Пользовательские Индикаторы", <IconScriptF key="c" badge />],
              ["Скрипты", <IconScroll key="s" />],
            ].map(([label, icon]) => (
              <TreeRow key={label as string}>
                <Expander />
                <TreeDash />
                <TreeIconBox>{icon}</TreeIconBox>
                {label}
              </TreeRow>
            ))}
          </Tree>
        </PanelBody>
        <TabStrip $h={19} $pad={1}>
          <Tab $w={54} $active>Общие</Tab>
          <Tab $w={75} $pad={10}>Избранное</Tab>
        </TabStrip>
      </LeftColumn>

      <ChartPane>
        <ChartCanvas>
          <Chart />
          {NOTES.map((n) => (
            <Note key={n.text} $x={n.x} $y={n.y} $w={n.w} $h={n.h} $ls={n.ls}>{n.text}</Note>
          ))}
          {MARKERS.map((m) => (
            <Marker key={m.x} $x={m.x} $y={m.y} $h={m.h} />
          ))}
        </ChartCanvas>
        <ChartTabs $h={21} $pad={0}>
          {CHART_TABS.map(([label, w, pad], i) => (
            <Tab key={i} $w={w} $pad={pad} $nosep={i === 6}>{label}</Tab>
          ))}
          <Tab $w={76} $active>GBPJPY,H4</Tab>
          <TabArrows><span>◂</span><span>▸</span></TabArrows>
        </ChartTabs>
      </ChartPane>
    </Main>

    <Terminal>
      <TerminalSide>
        <CloseMark>×</CloseMark>
        <SideLabel>Терминал</SideLabel>
      </TerminalSide>
      <TerminalMain>
        <TerminalTop>
          <NewsList>
            <HeaderRow $cols="149px 1fr" $h={21}>
              <HeadCell $pad={10}>Время</HeadCell>
              <HeadCell $pad={11}>Тема</HeadCell>
            </HeaderRow>
            {NEWS.map(([time, title], i) => (
              <NewsRow key={time} $odd={i % 2 === 0}>
                <NewsTime><IconNews />{time}</NewsTime>
                <NewsTitle>{title}</NewsTitle>
              </NewsRow>
            ))}
          </NewsList>
          <ScrollBar>
            <ScrollButton><Chevron up /></ScrollButton>
            <ScrollThumb $h={7} />
            <ScrollTrack />
            <ScrollButton><Chevron /></ScrollButton>
          </ScrollBar>
        </TerminalTop>
        <TabStrip $h={20} $pad={0} $line>
          <Tab $w={70} $pad={12}>Торговля</Tab>
          <Tab $w={97} $nosep>История Счета</Tab>
          <Tab $w={61} $active $lift>Новости</Tab>
          <Tab $w={64}>Сигналы</Tab>
          <Tab $w={101}>Почтовый ящик</Tab>
          <Tab $w={70} $pad={10}>Эксперты</Tab>
          <Tab $w={61} $pad={10}>Журнал</Tab>
        </TabStrip>
      </TerminalMain>
    </Terminal>

    <StatusBar>
      <StatusCell $w={558}>Для справки, нажмите F1</StatusCell>
      <StatusCell $w={494}>Default</StatusCell>
      <StatusCell $w={66} />
      <StatusCell $w={150}><ConnBars />1376/6 kb</StatusCell>
    </StatusBar>
  </Root>
);

export default App;
